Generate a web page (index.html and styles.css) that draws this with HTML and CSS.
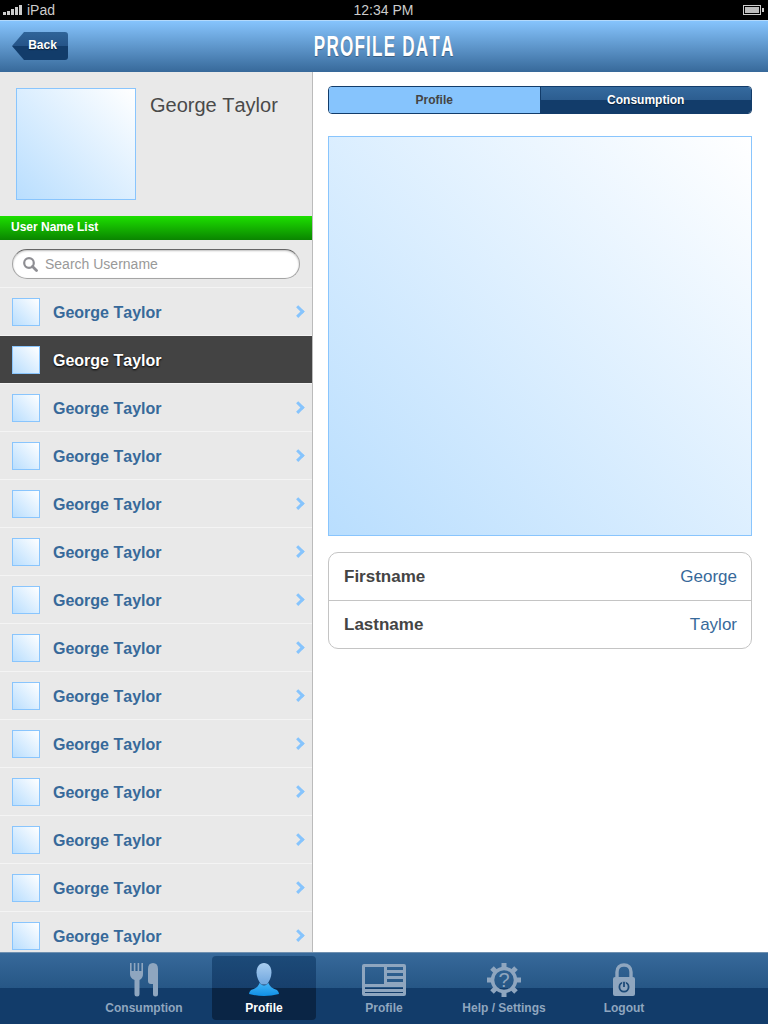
FILE: index.html
```html
<!DOCTYPE html>
<html lang="en">
<head>
    <meta charset="UTF-8">
    <title>Profile Data</title>
    <link rel="stylesheet" href="styles.css">
</head>
<body>
    <div class="statusbar">
        <div class="status-left">
            <svg width="19" height="10" viewBox="0 0 19 10"><rect x="0" y="7" width="3" height="3" fill="#ccc"/><rect x="4" y="6" width="3" height="4" fill="#ccc"/><rect x="8" y="4" width="3" height="6" fill="#ccc"/><rect x="12" y="2" width="3" height="8" fill="#ccc"/><rect x="16" y="0" width="3" height="10" fill="#ccc"/></svg>
            <span>iPad</span>
        </div>
        <div class="status-time">12:34 PM</div>
        <div class="status-right">
            <svg width="21" height="10" viewBox="0 0 21 10"><rect x="0.5" y="0.5" width="17" height="9" fill="none" stroke="#ccc"/><rect x="2" y="2" width="14" height="6" fill="#bbb"/><rect x="19" y="3" width="2" height="4" fill="#ccc"/></svg>
        </div>
    </div>

    <header class="navbar">
        <a class="back-btn">Back</a>
        <h1>PROFILE DATA</h1>
    </header>

    <div class="content">
        <aside class="sidebar">
            <div class="user-head">
                <div class="photo photo-big"></div>
                <div class="user-head-name">George Taylor</div>
            </div>
            <div class="list-title">User Name List</div>
            <div class="search-wrap">
                <div class="search">
                    <svg width="15" height="15" viewBox="0 0 15 15"><circle cx="6" cy="6" r="4.800" fill="none" stroke="#8e8e93" stroke-width="2.200"/><line x1="9.500" y1="9.500" x2="13.500" y2="13.500" stroke="#8e8e93" stroke-width="2.800" stroke-linecap="round"/></svg>
                    <span>Search Username</span>
                </div>
            </div>
            <ul class="user-list">
                <li><div class="photo photo-small"></div><span>George Taylor</span><i class="chevron"></i></li>
                <li class="active"><div class="photo photo-small"></div><span>George Taylor</span></li>
                <li><div class="photo photo-small"></div><span>George Taylor</span><i class="chevron"></i></li>
                <li><div class="photo photo-small"></div><span>George Taylor</span><i class="chevron"></i></li>
                <li><div class="photo photo-small"></div><span>George Taylor</span><i class="chevron"></i></li>
                <li><div class="photo photo-small"></div><span>George Taylor</span><i class="chevron"></i></li>
                <li><div class="photo photo-small"></div><span>George Taylor</span><i class="chevron"></i></li>
                <li><div class="photo photo-small"></div><span>George Taylor</span><i class="chevron"></i></li>
                <li><div class="photo photo-small"></div><span>George Taylor</span><i class="chevron"></i></li>
                <li><div class="photo photo-small"></div><span>George Taylor</span><i class="chevron"></i></li>
                <li><div class="photo photo-small"></div><span>George Taylor</span><i class="chevron"></i></li>
                <li><div class="photo photo-small"></div><span>George Taylor</span><i class="chevron"></i></li>
                <li><div class="photo photo-small"></div><span>George Taylor</span><i class="chevron"></i></li>
                <li><div class="photo photo-small"></div><span>George Taylor</span><i class="chevron"></i></li>
            </ul>
        </aside>

        <main class="detail">
            <div class="segments">
                <div class="segment segment-on">Profile</div>
                <div class="segment">Consumption</div>
            </div>
            <div class="photo photo-large"></div>
            <div class="info-table">
                <div class="info-row"><b>Firstname</b><span>George</span></div>
                <div class="info-row"><b>Lastname</b><span>Taylor</span></div>
            </div>
        </main>
    </div>

    <nav class="tabbar">
        <div class="tab">
            <svg width="30" height="34" viewBox="0 0 30 34" fill="#8fa6bf">
                <path d="M1 0h1.600v8h2.200V0h1.600v8h2.200V0h1.600v8h2.200V0H14v11q0 4-3.500 6v14q0 2.500-2.500 2.500T5.500 31V17Q1 15 1 11z"/>
                <path d="M19 6q0-6 5-6t5 6v25q0 2.500-2.500 2.500T24 31V21h-2q-3 0-3-3z"/>
            </svg>
            <span>Consumption</span>
        </div>
        <div class="tab tab-on">
            <svg width="30" height="34" viewBox="0 0 30 34">
                <defs>
                    <linearGradient id="head" x1="0" y1="0" x2="0" y2="1"><stop offset="0" stop-color="#a9cdf0"/><stop offset="1" stop-color="#6fa6de"/></linearGradient>
                    <linearGradient id="body" x1="0" y1="0" x2="0" y2="1"><stop offset="0" stop-color="#45b4f5"/><stop offset="1" stop-color="#0f8fe6"/></linearGradient>
                </defs>
                <path d="M15 0c4.500 0 7.500 4 7.500 9.500 0 5-2.500 9-4.500 12h-6c-2-3-4.500-7-4.500-12C7.500 4 10.500 0 15 0z" fill="url(#head)"/>
                <path d="M10.500 20q4.500 5 9 0 1.500 5 8.500 7 2 2 2 4-15 4-30 0 0-2 2-4 7-2 8.500-7z" fill="url(#body)"/>
            </svg>
            <span>Profile</span>
        </div>
        <div class="tab">
            <svg width="46" height="34" viewBox="0 0 46 34" fill="#8fa6bf">
                <path fill-rule="evenodd" d="M3 1h40q2 0 2 2v28q0 2-2 2H3q-2 0-2-2V3q0-2 2-2zM4 4v17h19V4zM26 4v3h16V4zM26 10v3h16v-3zM26 16v3h16v-3zM4 24v2h38v-2zM4 29v1h38v-1z"/>
            </svg>
            <span>Profile</span>
        </div>
        <div class="tab">
            <svg width="36" height="34" viewBox="0 0 36 34" fill="none">
                <g stroke="#8fa6bf">
                    <circle cx="18" cy="17" r="11.500" stroke-width="3.500"/>
                    <path stroke-width="5" d="M18 0v6M18 28v6M1 17h6M29 17h6M6 5l4 4M26 25l4 4M6 29l4-4M26 9l4-4"/>
                </g>
                <text x="18" y="24" text-anchor="middle" class="gear-mark">?</text>
            </svg>
            <span>Help / Settings</span>
        </div>
        <div class="tab">
            <svg width="24" height="34" viewBox="0 0 24 34" fill="none">
                <path d="M5 15V9C5 4.500 8 2 12 2s7 2.500 7 7v6" stroke="#8fa6bf" stroke-width="3.400"/>
                <rect x="1" y="14" width="22" height="19" rx="2" fill="#8fa6bf"/>
                <circle cx="12" cy="24" r="4.600" stroke="#1c4a78" stroke-width="1.800"/>
                <line x1="12" y1="18.500" x2="12" y2="24" stroke="#8fa6bf" stroke-width="3.600"/>
                <line x1="12" y1="19" x2="12" y2="24" stroke="#1c4a78" stroke-width="1.800"/>
            </svg>
            <span>Logout</span>
        </div>
    </nav>
</body>
</html>
```

FILE: styles.css
```css
* {
    box-sizing: border-box;
}

body {
    margin: 0;
    width: 768px;
    height: 1024px;
    overflow: hidden;
    display: flex;
    flex-direction: column;
    font-family: 'Liberation Sans', Arial, sans-serif;
    font-kerning: none;
    background-color: #fff;
    color: #444;
}

.statusbar {
    height: 20px;
    flex: none;
    background-color: #000;
    color: #ccc;
    font-size: 14px;
    display: grid;
    grid-template-columns: 1fr auto 1fr;
    align-items: center;
    padding: 0 4px 0 3px;
}

.status-left {
    display: flex;
    align-items: center;
    gap: 5px;
}

.status-right {
    display: flex;
    justify-content: flex-end;
}

.navbar {
    height: 52px;
    flex: none;
    position: relative;
    display: flex;
    align-items: center;
    justify-content: center;
    border-top: 1px solid #b3d9fb;
    background: linear-gradient(#86c4fd, #37699a);
}

.navbar h1 {
    margin: 0;
    color: #fff;
    font-size: 29px;
    font-weight: bold;
    letter-spacing: 2px;
    white-space: nowrap;
    transform: scaleX(.59);
    text-shadow: 0 1px 1px rgba(0, 0, 0, .3);
}

.back-btn {
    position: absolute;
    left: 12px;
    top: 11px;
    width: 56px;
    height: 28px;
    padding-left: 5px;
    color: #fff;
    font-size: 12px;
    font-weight: bold;
    line-height: 27px;
    text-align: center;
    background: linear-gradient(#2f6499 0, #255488 50%, #123c6a 50%, #123c6a 100%);
    clip-path: polygon(0 50%, 12px 0, 100% 0, 100% 100%, 12px 100%);
    border-radius: 3px;
    text-shadow: 0 1px 1px rgba(0, 0, 0, .5);
}

.content {
    flex: 1;
    display: flex;
    min-height: 0;
}

.sidebar {
    width: 313px;
    flex: none;
    background-color: #e9e9e9;
    border-right: 1px solid #bbb;
    overflow: hidden;
}

.photo {
    border: 1px solid #89c5fd;
    background: linear-gradient(45deg, #b9defe, #fff);
}

.user-head {
    height: 144px;
    display: flex;
    padding: 16px 0 0 16px;
}

.photo-big {
    width: 120px;
    height: 112px;
}

.user-head-name {
    margin: 6px 0 0 14px;
    font-size: 20px;
    color: #4a4a4a;
}

.list-title {
    height: 24px;
    padding-left: 11px;
    color: #fff;
    font-size: 12px;
    font-weight: bold;
    line-height: 22px;
    background: linear-gradient(#1de000, #0a8500);
}

.search-wrap {
    height: 48px;
    padding: 9px 12px 0;
    border-bottom: 1px solid #f4f4f4;
}

.search {
    height: 30px;
    display: flex;
    align-items: center;
    gap: 7px;
    padding-left: 10px;
    background-color: #fff;
    border: 1px solid #a5a5a5;
    border-top-color: #666;
    border-radius: 15px;
    box-shadow: inset 0 1px 2px rgba(0, 0, 0, .25);
    color: #999;
    font-size: 14px;
}

.user-list {
    list-style: none;
    margin: 0;
    padding: 0;
}

.user-list li {
    height: 48px;
    display: flex;
    align-items: center;
    padding: 0 12px;
    border-bottom: 1px solid #f4f4f4;
    color: #37699a;
    font-size: 16px;
    font-weight: bold;
}

.user-list li span {
    flex: 1;
    margin-left: 13px;
    padding-top: 2px;
}

.user-list li.active {
    background-color: #434343;
    color: #fff;
    text-shadow: 0 1px 2px #000;
}

.photo-small {
    width: 28px;
    height: 28px;
    flex: none;
}

.chevron {
    width: 8.500px;
    height: 8.500px;
    margin-right: -2px;
    border-top: 3px solid #86c4fd;
    border-right: 3px solid #86c4fd;
    transform: rotate(45deg);
}

.detail {
    flex: 1;
    padding: 14px 16px 0 15px;
}

.segments {
    height: 28px;
    display: flex;
    border: 1px solid #123c6a;
    border-radius: 4px;
    overflow: hidden;
    font-size: 12px;
    font-weight: bold;
    line-height: 26px;
    text-align: center;
}

.segment {
    flex: 1;
    color: #fff;
    text-shadow: 0 1px 1px rgba(0, 0, 0, .5);
    background: linear-gradient(#356a9e 0, #2c5d90 50%, #123c6a 50%, #123c6a 100%);
}

.segment-on {
    color: #444;
    text-shadow: none;
    background: #86c4fd;
    border-right: 1px solid #123c6a;
}

.photo-large {
    height: 400px;
    margin-top: 22px;
}

.info-table {
    margin-top: 16px;
    border: 1px solid #c4c4c4;
    border-radius: 10px;
}

.info-row {
    height: 47px;
    display: flex;
    align-items: center;
    justify-content: space-between;
    padding: 0 14px 0 15px;
    font-size: 17px;
}

.info-row + .info-row {
    height: 48px;
    border-top: 1px solid #c4c4c4;
}

.info-row span {
    color: #37699a;
}

.tabbar {
    height: 72px;
    flex: none;
    display: flex;
    justify-content: center;
    padding-top: 3px;
    border-top: 1px solid #6f90b0;
    background: linear-gradient(#37699a 0, #265685 50%, #123c6a 50%, #123c6a 100%);
}

.tab {
    height: 64px;
    width: 104px;
    margin: 0 8px;
    display: flex;
    flex-direction: column;
    align-items: center;
    gap: 4px;
    padding-top: 7px;
    border-radius: 4px;
    color: #8fa6bf;
    font-size: 12px;
    font-weight: bold;
    line-height: 14px;
}

.tab svg {
    flex: none;
}

.tab-on {
    color: #fff;
    background: linear-gradient(#1c4a78 0, #173f6c 50%, #0a2545 50%, #0a2545 100%);
}

.gear-mark {
    font-size: 20px;
    font-weight: normal;
    fill: #8fa6bf;
}
```
